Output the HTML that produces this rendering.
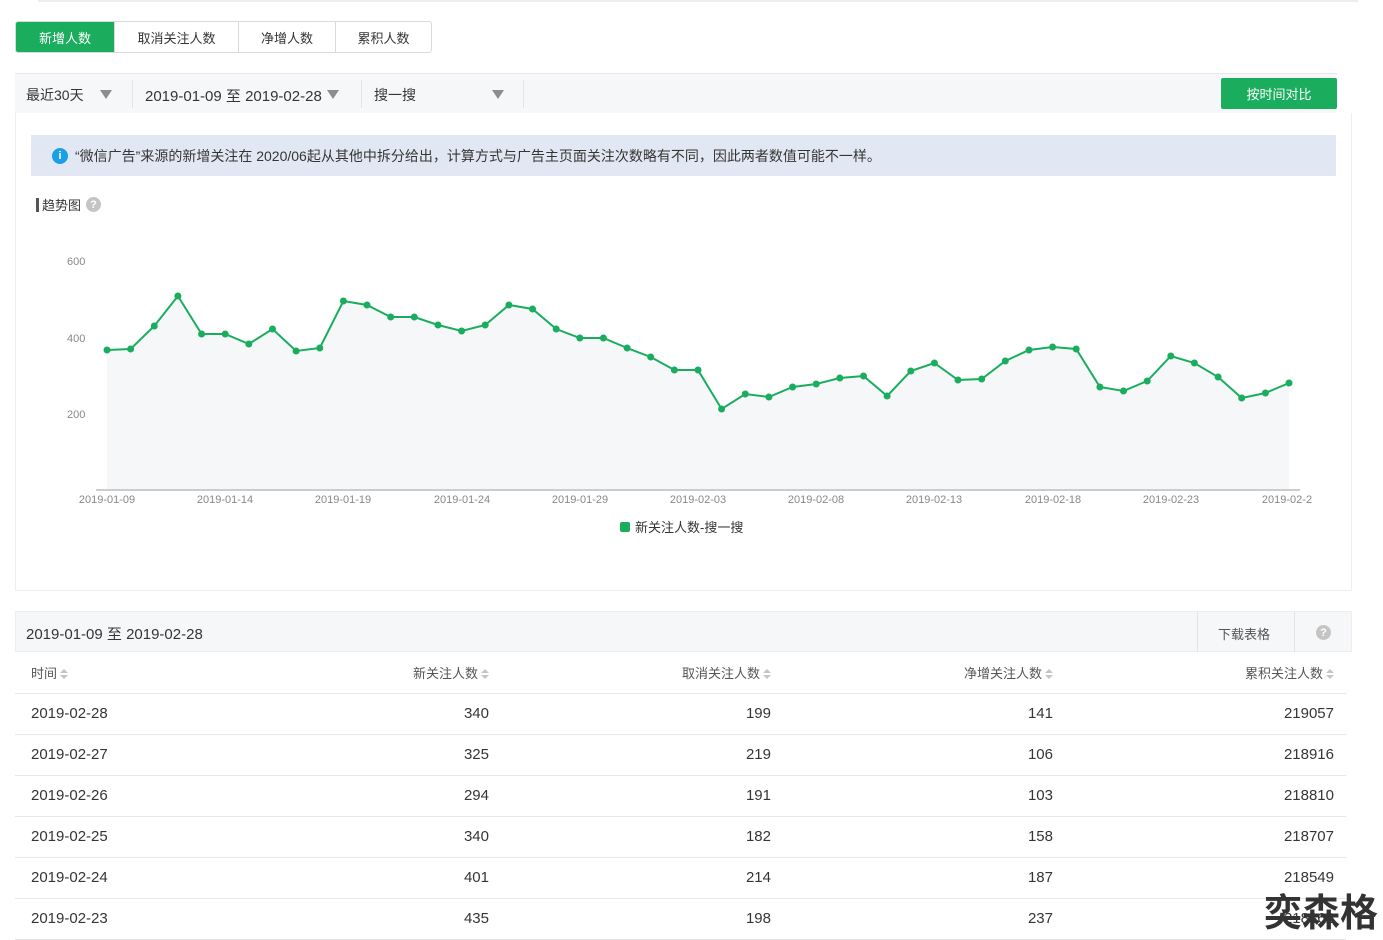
<!DOCTYPE html>
<html><head><meta charset="utf-8"><style>
*{margin:0;padding:0;box-sizing:border-box}
body{width:1383px;height:929px;background:#fff;font-family:"Liberation Sans","Noto Sans CJK SC",sans-serif;color:#353535;position:relative;overflow:hidden}
.abs{position:absolute}
.tabs{left:15px;top:21px;height:32px;display:flex;border:1px solid #d9dadc;border-radius:3px;overflow:hidden;font-size:13px}
.tabs div{display:flex;align-items:center;justify-content:center;border-left:1px solid #d9dadc;color:#353535}
.tabs div:first-child{border-left:none;background:#1aad5e;color:#fff}
.bar{left:15px;top:73px;width:1322px;height:40px;background:#f6f7f9;border-top:1px solid #e7e7eb;font-size:14px}
.bar span{position:absolute;top:11px}
.tri{position:absolute;top:16px;width:0;height:0;border-left:6px solid transparent;border-right:6px solid transparent;border-top:9px solid #8d8d8d}
.btn{left:1221px;top:78px;width:116px;height:31px;background:#1aad5e;color:#fff;font-size:13px;border-radius:2px;display:flex;align-items:center;justify-content:center}
.panel{left:15px;top:113px;width:1337px;height:478px;border-left:1px solid #eee;border-right:1px solid #eee;border-bottom:1px solid #eee}
.info{left:31px;top:135px;width:1305px;height:41px;background:#e2e8f3;font-size:14px;display:flex;align-items:center;padding-left:21px;white-space:nowrap}
.info i{width:16px;height:16px;border-radius:50%;background:#1d9fe8;color:#fff;font-style:normal;font-size:11px;font-weight:bold;display:inline-flex;align-items:center;justify-content:center;margin-right:7px}
.q{display:inline-flex;width:15px;height:15px;border-radius:50%;background:#c4c4c4;color:#fff;font-size:11px;font-weight:bold;align-items:center;justify-content:center}
table{position:absolute;left:15px;top:652px;width:1331px;border-collapse:collapse;font-size:15px}
td{height:41px;border-bottom:1px solid #e7e7eb;text-align:right;padding-right:12px}
td:first-child{text-align:left;padding-left:16px}
tr.h td{font-size:13px;color:#555}
.s{display:inline-block;width:8px;height:10px;vertical-align:-1px;margin-left:3px;position:relative}
.s:before{content:"";position:absolute;left:0;top:0;border-left:4px solid transparent;border-right:4px solid transparent;border-bottom:4px solid #c5c5c5}
.s:after{content:"";position:absolute;left:0;top:6px;border-left:4px solid transparent;border-right:4px solid transparent;border-top:4px solid #c5c5c5}
</style></head><body>
<div class="abs" style="left:38px;top:0;width:1320px;height:2px;background:#eee"></div>
<div class="abs tabs"><div style="width:98px">新增人数</div><div style="width:124px">取消关注人数</div><div style="width:97px">净增人数</div><div style="width:96px">累积人数</div></div>
<div class="abs bar">
<span style="left:11px">最近30天</span><div class="tri" style="left:85px"></div>
<div class="abs" style="left:117px;top:6px;width:1px;height:28px;background:#e4e4e4"></div>
<span style="left:130px;font-size:15px">2019-01-09 至 2019-02-28</span><div class="tri" style="left:312px"></div>
<div class="abs" style="left:346px;top:6px;width:1px;height:28px;background:#e4e4e4"></div>
<span style="left:359px">搜一搜</span><div class="tri" style="left:477px"></div>
<div class="abs" style="left:508px;top:6px;width:1px;height:28px;background:#e4e4e4"></div>
</div>
<div class="abs btn">按时间对比</div>
<div class="abs panel"></div>
<div class="abs info"><i>i</i>“微信广告”来源的新增关注在 2020/06起从其他中拆分给出，计算方式与广告主页面关注次数略有不同，因此两者数值可能不一样。</div>
<div class="abs" style="left:36px;top:195px;font-size:13px;display:flex;align-items:center"><span style="width:3px;height:14px;background:#555;margin-right:3px"></span>趋势图 <span class="q" style="margin-left:5px">?</span></div>
<svg class="abs" style="left:0;top:240px" width="1383" height="300" viewBox="0 240 1383 300">
<g font-family="Liberation Sans" font-size="11" fill="#888">
<text x="67" y="265">600</text><text x="67" y="342">400</text><text x="67" y="418">200</text>
<g text-anchor="middle"><text x="107" y="503">2019-01-09</text><text x="225" y="503">2019-01-14</text><text x="343" y="503">2019-01-19</text><text x="462" y="503">2019-01-24</text><text x="580" y="503">2019-01-29</text><text x="698" y="503">2019-02-03</text><text x="816" y="503">2019-02-08</text><text x="934" y="503">2019-02-13</text><text x="1053" y="503">2019-02-18</text><text x="1171" y="503">2019-02-23</text><text x="1287" y="503">2019-02-2</text></g>
</g>
<polygon fill="#f5f7f9" points="107,490 107,350 130.6,349 154.3,326 177.9,296 201.6,334 225.2,334 248.8,344 272.5,329 296.1,351 319.8,348 343.4,301 367,305 390.7,317 414.3,317 438,325 461.6,331 485.2,325 508.9,305 532.5,309 556.2,329 579.8,338 603.4,338 627.1,348 650.7,357 674.4,370 698,370 721.6,409 745.3,394 768.9,397 792.6,387 816.2,384 839.8,378 863.5,376 887.1,396 910.8,371 934.4,363 958,380 981.7,379 1005.3,361 1029,350 1052.6,347 1076.2,349 1099.9,387 1123.5,391 1147.2,381 1170.8,356 1194.4,363 1218.1,377 1241.7,398 1265.4,393 1289,383 1289,490"/>
<line x1="96" y1="490" x2="1300" y2="490" stroke="#ccc" stroke-width="2"/>
<polyline fill="none" stroke="#1aad5e" stroke-width="2" points="107,350 130.6,349 154.3,326 177.9,296 201.6,334 225.2,334 248.8,344 272.5,329 296.1,351 319.8,348 343.4,301 367,305 390.7,317 414.3,317 438,325 461.6,331 485.2,325 508.9,305 532.5,309 556.2,329 579.8,338 603.4,338 627.1,348 650.7,357 674.4,370 698,370 721.6,409 745.3,394 768.9,397 792.6,387 816.2,384 839.8,378 863.5,376 887.1,396 910.8,371 934.4,363 958,380 981.7,379 1005.3,361 1029,350 1052.6,347 1076.2,349 1099.9,387 1123.5,391 1147.2,381 1170.8,356 1194.4,363 1218.1,377 1241.7,398 1265.4,393 1289,383"/>
<g fill="#1aad5e">
<circle cx="107" cy="350" r="3.5"/><circle cx="130.6" cy="349" r="3.5"/><circle cx="154.3" cy="326" r="3.5"/><circle cx="177.9" cy="296" r="3.5"/><circle cx="201.6" cy="334" r="3.5"/><circle cx="225.2" cy="334" r="3.5"/><circle cx="248.8" cy="344" r="3.5"/><circle cx="272.5" cy="329" r="3.5"/><circle cx="296.1" cy="351" r="3.5"/><circle cx="319.8" cy="348" r="3.5"/><circle cx="343.4" cy="301" r="3.5"/><circle cx="367" cy="305" r="3.5"/><circle cx="390.7" cy="317" r="3.5"/><circle cx="414.3" cy="317" r="3.5"/><circle cx="438" cy="325" r="3.5"/><circle cx="461.6" cy="331" r="3.5"/><circle cx="485.2" cy="325" r="3.5"/><circle cx="508.9" cy="305" r="3.5"/><circle cx="532.5" cy="309" r="3.5"/><circle cx="556.2" cy="329" r="3.5"/><circle cx="579.8" cy="338" r="3.5"/><circle cx="603.4" cy="338" r="3.5"/><circle cx="627.1" cy="348" r="3.5"/><circle cx="650.7" cy="357" r="3.5"/><circle cx="674.4" cy="370" r="3.5"/><circle cx="698" cy="370" r="3.5"/><circle cx="721.6" cy="409" r="3.5"/><circle cx="745.3" cy="394" r="3.5"/><circle cx="768.9" cy="397" r="3.5"/><circle cx="792.6" cy="387" r="3.5"/><circle cx="816.2" cy="384" r="3.5"/><circle cx="839.8" cy="378" r="3.5"/><circle cx="863.5" cy="376" r="3.5"/><circle cx="887.1" cy="396" r="3.5"/><circle cx="910.8" cy="371" r="3.5"/><circle cx="934.4" cy="363" r="3.5"/><circle cx="958" cy="380" r="3.5"/><circle cx="981.7" cy="379" r="3.5"/><circle cx="1005.3" cy="361" r="3.5"/><circle cx="1029" cy="350" r="3.5"/><circle cx="1052.6" cy="347" r="3.5"/><circle cx="1076.2" cy="349" r="3.5"/><circle cx="1099.9" cy="387" r="3.5"/><circle cx="1123.5" cy="391" r="3.5"/><circle cx="1147.2" cy="381" r="3.5"/><circle cx="1170.8" cy="356" r="3.5"/><circle cx="1194.4" cy="363" r="3.5"/><circle cx="1218.1" cy="377" r="3.5"/><circle cx="1241.7" cy="398" r="3.5"/><circle cx="1265.4" cy="393" r="3.5"/><circle cx="1289" cy="383" r="3.5"/>
</g>
<rect x="620" y="522" width="10" height="10" rx="2" fill="#1aad5e"/>
<text x="635" y="532" font-size="13" fill="#353535" font-family="Liberation Sans, Noto Sans CJK SC, sans-serif">新关注人数-搜一搜</text>
</svg>
<div class="abs" style="left:15px;top:611px;width:1337px;height:41px;background:#f6f7f9;border:1px solid #eee;font-size:15px">
<span class="abs" style="left:10px;top:11px">2019-01-09 至 2019-02-28</span>
<div class="abs" style="left:1181px;top:0;width:1px;height:40px;background:#e4e4e4"></div>
<span class="abs" style="left:1202px;top:12px;font-size:13px;color:#555">下载表格</span>
<div class="abs" style="left:1278px;top:0;width:1px;height:40px;background:#e4e4e4"></div>
<span class="q abs" style="left:1300px;top:13px">?</span>
</div>
<table>
<tr class="h"><td style="width:300px">时间<span class="s"></span></td><td style="width:186px">新关注人数<span class="s"></span></td><td style="width:282px">取消关注人数<span class="s"></span></td><td style="width:282px">净增关注人数<span class="s"></span></td><td>累积关注人数<span class="s"></span></td></tr>
<tr><td>2019-02-28</td><td>340</td><td>199</td><td>141</td><td>219057</td></tr>
<tr><td>2019-02-27</td><td>325</td><td>219</td><td>106</td><td>218916</td></tr>
<tr><td>2019-02-26</td><td>294</td><td>191</td><td>103</td><td>218810</td></tr>
<tr><td>2019-02-25</td><td>340</td><td>182</td><td>158</td><td>218707</td></tr>
<tr><td>2019-02-24</td><td>401</td><td>214</td><td>187</td><td>218549</td></tr>
<tr><td>2019-02-23</td><td>435</td><td>198</td><td>237</td><td>218362</td></tr>
</table>
<div class="abs" style="left:1264px;top:886px;font-size:38px;font-weight:bold;color:#333;line-height:48px;white-space:nowrap;font-family:'Noto Sans CJK SC',sans-serif">奕森格</div>
</body></html>
